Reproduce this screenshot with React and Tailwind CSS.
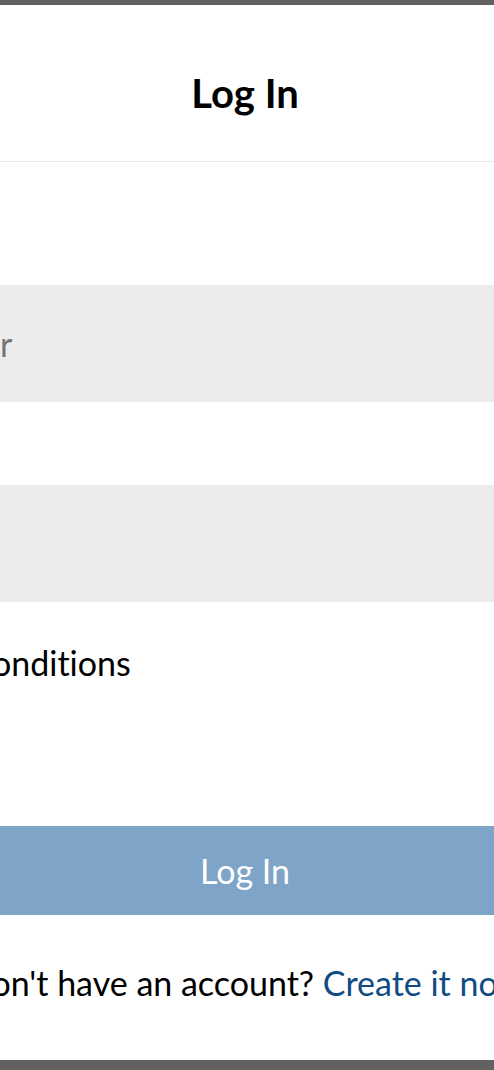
export default function App() {
  return (
    <div className="h-[1070px] w-full overflow-hidden bg-[#616161] pt-[5px] font-['Lato',sans-serif] [font-variant-ligatures:none]">
      <div className="ml-[-255px] flex h-[1055px] w-[1000px] flex-col bg-white">
        {/* Header */}
        <div className="h-[157px] border-b border-[#e6e6e6] pt-[68px] text-center">
          <h1 className="text-[40px] font-bold leading-[40px] text-black">Log In</h1>
        </div>

        {/* Form */}
        <div className="flex flex-col px-[36px] pt-[123px]">
          <input
            type="text"
            placeholder="Phone number"
            className="h-[117px] w-full bg-[#ececec] pl-[12px] text-[34px] text-black outline-none placeholder:text-[#757575]"
          />
          <input
            type="password"
            placeholder="Password"
            className="mt-[83px] h-[117px] w-full bg-[#ececec] pl-[12px] text-[34px] text-black outline-none placeholder:text-[#757575]"
          />

          <label className="mt-[41px] flex h-[40px] items-center gap-[26px]">
            <input type="checkbox" className="h-[32px] w-[32px]" />
            <span className="text-[34px] leading-[40px] text-black">Terms &amp; Conditions</span>
          </label>

          <button className="mt-[143px] h-[89px] w-full bg-[#7ea4c7] text-[34px] text-white">
            Log In
          </button>

          <p className="mt-[48px] text-center text-[34px] leading-[40px] text-black">
            Don't have an account? <a className="text-[#104b84]">Create it now</a>
          </p>
        </div>
      </div>
    </div>
  );
}
